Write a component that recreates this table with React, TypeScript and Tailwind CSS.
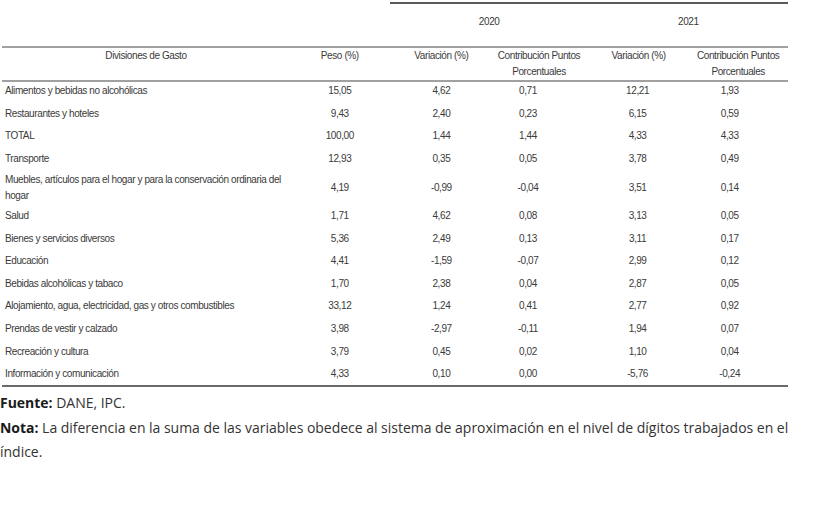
import React from "react";

type Row = { name: React.ReactNode; v: string[]; tall?: boolean };

const rows: Row[] = [
  { name: "Alimentos y bebidas no alcohólicas", v: ["15,05", "4,62", "0,71", "12,21", "1,93"] },
  { name: "Restaurantes y hoteles", v: ["9,43", "2,40", "0,23", "6,15", "0,59"] },
  { name: "TOTAL", v: ["100,00", "1,44", "1,44", "4,33", "4,33"] },
  { name: "Transporte", v: ["12,93", "0,35", "0,05", "3,78", "0,49"] },
  {
    name: (
      <>
        Muebles, artículos para el hogar y para la conservación ordinaria del
        <br />
        hogar
      </>
    ),
    v: ["4,19", "-0,99", "-0,04", "3,51", "0,14"],
    tall: true,
  },
  { name: "Salud", v: ["1,71", "4,62", "0,08", "3,13", "0,05"] },
  { name: "Bienes y servicios diversos", v: ["5,36", "2,49", "0,13", "3,11", "0,17"] },
  { name: "Educación", v: ["4,41", "-1,59", "-0,07", "2,99", "0,12"] },
  { name: "Bebidas alcohólicas y tabaco", v: ["1,70", "2,38", "0,04", "2,87", "0,05"] },
  { name: "Alojamiento, agua, electricidad, gas y otros combustibles", v: ["33,12", "1,24", "0,41", "2,77", "0,92"] },
  { name: "Prendas de vestir y calzado", v: ["3,98", "-2,97", "-0,11", "1,94", "0,07"] },
  { name: "Recreación y cultura", v: ["3,79", "0,45", "0,02", "1,10", "0,04"] },
  { name: "Información y comunicación", v: ["4,33", "0,10", "0,00", "-5,76", "-0,24"] },
];

const numPad = ["pl-0", "pl-[4px]", "pr-[22px]", "pr-[2px]", "pr-[17px]"];

export default function App() {
  return (
    <div className="w-[828px] h-[508px] bg-white text-[#3a3a3a] overflow-hidden">
      <div
        className="ml-[2px] w-[786px] pt-[2px] text-[10px] tracking-[-0.4px]"
        style={{ fontFamily: '"Liberation Sans", Arial, sans-serif' }}
      >
        {/* year row */}
        <div className="grid grid-cols-[288px_99.6px_199.2px_199.2px] h-[44px]">
          <div />
          <div />
          <div className="border-t-2 border-[#5a5a5a] pt-[12px] leading-[12px] text-center">2020</div>
          <div className="border-t-2 border-[#5a5a5a] pt-[12px] leading-[12px] text-center">2021</div>
        </div>
        {/* header row */}
        <div className="grid grid-cols-[288px_repeat(5,99.6px)] h-[36px] border-y-2 border-[#a0a0a0] leading-[16px] text-center">
          <div>Divisiones de Gasto</div>
          <div>Peso (%)</div>
          <div className="pl-[4px]">Variación (%)</div>
          <div>
            Contribución Puntos
            <br />
            Porcentuales
          </div>
          <div>Variación (%)</div>
          <div>
            Contribución Puntos
            <br />
            Porcentuales
          </div>
        </div>
        {/* data rows */}
        <div className="flex flex-col">
          {rows.map((r, i) => {
            const last = i === rows.length - 1;
            const h = r.tall ? "h-[34.6px]" : last ? "h-[20px]" : "h-[22.6px]";
            return (
              <div key={i} className={`grid grid-cols-[288px_repeat(5,99.6px)] ${h}`}>
                <div className={`pl-[3px] ${r.tall ? "leading-[16px]" : "leading-[18px]"}`}>{r.name}</div>
                {r.v.map((n, j) => (
                  <div
                    key={j}
                    className={`text-center ${numPad[j]} ${r.tall ? "leading-[32px]" : "leading-[18px]"}`}
                  >
                    {n}
                  </div>
                ))}
              </div>
            );
          })}
        </div>
        <div className="h-[2px] bg-[#6a6a6a]" />
      </div>
      <div
        className="mt-[4px] text-[14px] leading-[24.5px] text-[#333] tracking-[-0.02px]"
        style={{ fontFamily: '"Open Sans", "Noto Sans", sans-serif' }}
      >
        <p>
          <b className="font-bold text-[#1a1a1a]">Fuente:</b> DANE, IPC.
        </p>
        <p className="w-[800px]">
          <b className="font-bold text-[#1a1a1a]">Nota:</b> La diferencia en la suma de las variables obedece al
          sistema de aproximación en el nivel de dígitos trabajados en el índice.
        </p>
      </div>
    </div>
  );
}
